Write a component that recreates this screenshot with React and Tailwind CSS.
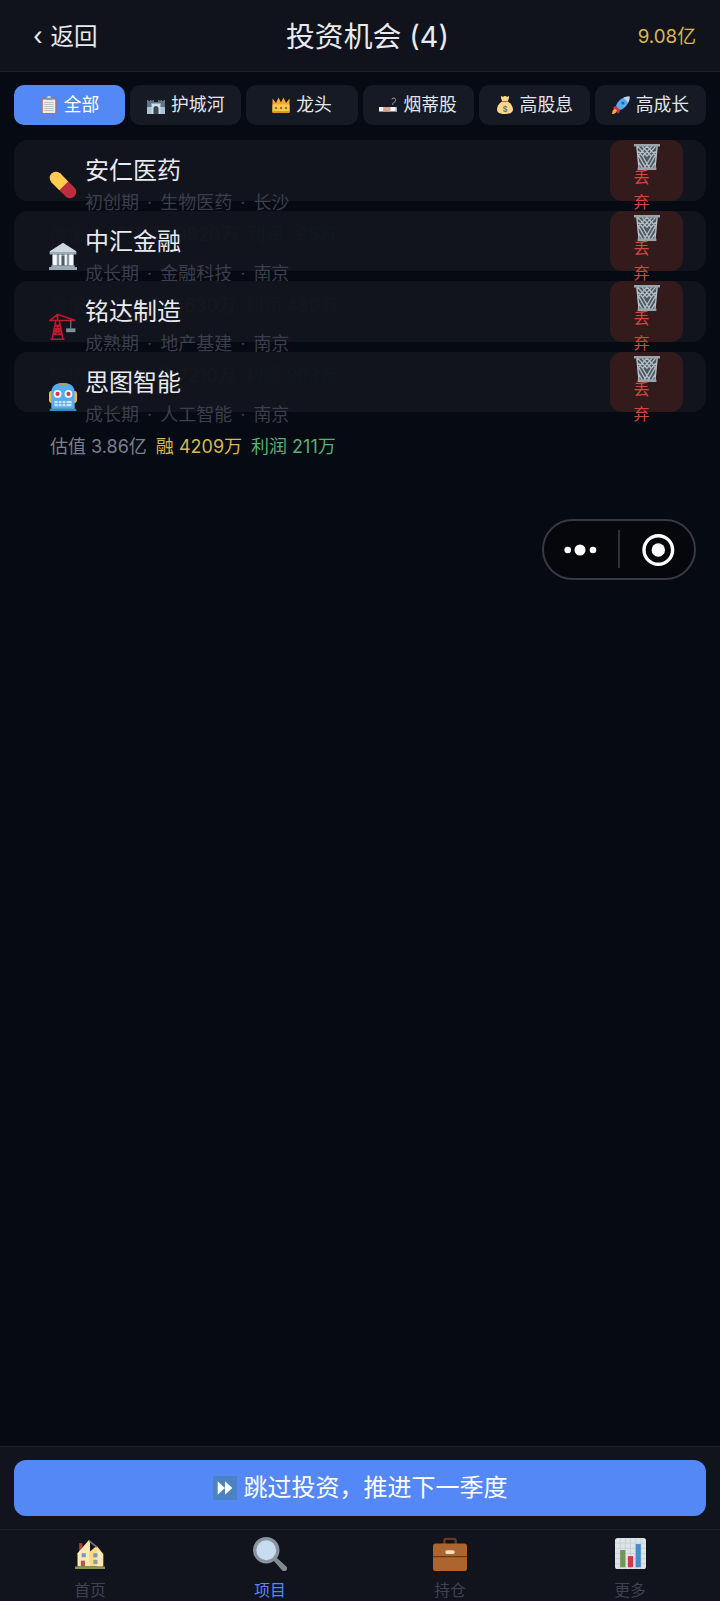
import React from "react";

const Pill = () => (
  <svg viewBox="0 0 36 36" className="w-full h-full">
    <path d="M9 9 27 27" stroke="#BE2D3D" strokeWidth="16" strokeLinecap="round" fill="none" />
    <circle cx="9" cy="9" r="8" fill="#FFCC4D" />
    <path d="M9 9 19 19" stroke="#FFCC4D" strokeWidth="16" fill="none" />
  </svg>
);
const Bank = () => (
  <svg viewBox="0 0 36 36" className="w-full h-full">
    <path fill="#CCD6DD" d="M18 1 35 12v3H1v-3z" />
    <path fill="#99AAB5" d="M1 13h34v3H1zM3 30h30v2H3zM0 32h36v4H0z" />
    <path fill="#8899A6" d="M4 16h28v14H4z" />
    <path fill="#4E5B66" d="M13 18h10v12H13z" />
    <path fill="#F5F8FA" d="M5 16h5v14H5zM13 16h3v14h-3zM20 16h3v14h-3zM26 16h5v14h-5z" />
  </svg>
);
const Crane = () => (
  <svg viewBox="0 0 36 36" className="w-full h-full">
    <path fill="none" stroke="#BE1931" strokeWidth="2" d="M9 10 4 35M13 10l5 25M2 35h18M7 17h8M6 23h10M5 29h12M7 17l9 6M15 17l-9 6M6 23l11 6M16 23 5 29M1 11 11 3l23 8zM11 3v7" />
    <path fill="none" stroke="#99AAB5" strokeWidth="1" d="M28 11v10" />
    <path fill="#808F99" d="M22 21h12v5H22z" />
  </svg>
);
const Robot = () => (
  <svg viewBox="0 0 36 36" className="w-full h-full">
    <path fill="#F4B740" d="M0 14a4 4 0 0 1 4-4h28a4 4 0 0 1 4 4v8a4 4 0 0 1-4 4H4a4 4 0 0 1-4-4z" />
    <path fill="#55ACEE" d="M3 12C3 3 10 0 18 0s15 3 15 12v20a2 2 0 0 1-2 2H5a2 2 0 0 1-2-2z" />
    <path fill="#F4900C" d="M12 .5h12v2H12z" opacity=".7" />
    <circle cx="11" cy="14" r="5" fill="#F5F8FA" />
    <circle cx="25" cy="14" r="5" fill="#F5F8FA" />
    <circle cx="11" cy="14" r="2.6" fill="#DD2E44" />
    <circle cx="25" cy="14" r="2.6" fill="#DD2E44" />
    <path fill="#CFE6F7" d="M7 23h22v5a2 2 0 0 1-2 2H9a2 2 0 0 1-2-2z" />
    <path fill="#55ACEE" d="M11 23h1.5v7H11zM16 23h1.5v7H16zM21 23h1.5v7H21zM7 26h22v1H7z" />
    <path fill="#3B88C3" d="M1 33h34v3H1z" />
  </svg>
);
const Clipboard = () => (
  <svg viewBox="0 0 36 36" className="w-full h-full">
    <rect x="3" y="4" width="30" height="32" rx="3" fill="#C1694F" />
    <rect x="5.5" y="7" width="25" height="27" rx="1" fill="#E8EDF0" />
    <path fill="#B9C4CC" d="M9 12h18v2H9zM9 16h18v2H9zM9 20h18v2H9zM9 24h18v2H9zM9 28h18v2H9z" />
    <path fill="#8899A6" d="M12 3h12v5H12z" />
    <path fill="#CCD6DD" d="M15 0h6v4h-6z" />
  </svg>
);
const Castle = () => (
  <svg viewBox="0 0 36 36" className="w-full h-full">
    <path fill="#5F7488" d="M0 8h3v2h3V8h3v2h2V8h3v4h8V8h3v2h2V8h3v2h3V8h3v26H0z" />
    <path fill="#A9C3D6" d="M0 22h36v14H0z" />
    <path fill="#CFDDE6" d="M9 14h18v22H9z" />
    <path fill="#3A4750" d="M13 36V25a5 5 0 0 1 10 0v11z" />
    <path fill="#5F7488" d="M9 12h18v3H9z" />
  </svg>
);
const Crown = () => (
  <svg viewBox="0 0 36 36" className="w-full h-full">
    <path fill="#F9A930" d="M1 33h34V5l-7 9-5-11-5 10-5-10-5 11-7-9z" />
    <path fill="#FFCC4D" d="M1 17h34v16H1z" />
    <circle cx="8" cy="24" r="2.5" fill="#7E7A3A" />
    <circle cx="18" cy="24" r="2.5" fill="#BE5B3C" />
    <circle cx="28" cy="24" r="2.5" fill="#7E7A3A" />
    <path fill="#F4900C" d="M1 30h34v3H1z" />
  </svg>
);
const Cigarette = () => (
  <svg viewBox="0 0 36 36" className="w-full h-full">
    <path fill="#F5F8FA" d="M0 22h36v9H0z" />
    <path fill="#D9A58F" d="M8 22h15v9H8z" />
    <path fill="#99AAB5" d="M33 22h3v9h-3z" />
    <path fill="none" stroke="#99AAB5" strokeWidth="2" d="M28 18c-2-2 0-4 2-5 4-2 4-6 2-8-2-2-6-1-6 2" />
  </svg>
);
const Bag = () => (
  <svg viewBox="0 0 36 36" className="w-full h-full">
    <path fill="#FDD888" d="M18 10C8 10 2 20 2 27c0 6 5 9 16 9s16-3 16-9c0-7-6-17-16-17z" />
    <path fill="#FDD888" d="M10 0c2 1 3 2 5 1s2-1 3-1 1 0 3 1 3 0 5-1c1 1-1 9-3 11H13C11 9 9 1 10 0z" />
    <path fill="#BF6952" d="M12 10h12v2.2H12z" />
    <text x="18" y="31" textAnchor="middle" fontSize="17" fontWeight="700" fill="#67757F" fontFamily="Liberation Sans, sans-serif">$</text>
  </svg>
);
const Rocket = () => (
  <svg viewBox="0 0 36 36" className="w-full h-full">
    <path fill="#DD2E44" d="M2 23c3-3 7-3 9-2l4 6c1 2 1 5-3 9-1-3-2-6-4-7-2-1-4-2-6-6z" />
    <path fill="#FFAC33" d="M3 27c-2 2-3 8-3 9s6-1 8-3c2-1 2-4 1-5-2-2-4-3-6-1z" />
    <path fill="#55ACEE" d="M35 1s-9-1-18 6c-5 4-8 9-9 13l8 8c4-1 9-4 13-9 7-9 6-18 6-18z" />
    <path fill="#CCD6DD" d="M35 1s-6-.5-12 2.5l9.5 9.5C36 7 35 1 35 1z" />
    <circle cx="22" cy="14" r="3.2" fill="#269" />
  </svg>
);
const Basket = () => (
  <svg viewBox="0 0 36 36" className="w-full h-full">
    <path fill="#4F5963" d="M3 2h30l-3 32H6z" />
    <path fill="none" stroke="#B4BEC6" strokeWidth="1.8" d="M5 3l13 14L30 3M11 3l13 14L30 10M18 3l12 13M25 3 12 17 6 10M18 3 6 16M6 15l11 19M30 15 19 34M12 17l10 17M24 17 14 34M6 24l6 10M30 24l-6 10M4 3l3 31M32 3l-3 31" />
    <path fill="#99A4AC" d="M0 0h36v3.5H0zM5 32.5h26V36H5z" />
  </svg>
);
const FastForward = () => (
  <svg viewBox="0 0 36 36" className="w-full h-full">
    <path fill="#4A83BF" d="M0 0h36v36H0z" />
    <path fill="#FFF" d="M7 8l11 10-11 10zM18 8l11 10-11 10z" />
  </svg>
);
const House = () => (
  <svg viewBox="0 0 36 36" className="w-full h-full">
    <path fill="#A8443C" d="M5 5h4v12H5z" />
    <path fill="#FFE8B6" d="M17 1 3 17v16h15V3z" />
    <path fill="#FFD983" d="M17 33V16l9-8 8 10v15z" />
    <path fill="#6B7680" d="M17 1l10 8-1.5 1.5-8.5-7z" />
    <path fill="#FFE8B6" d="M26 11l7 7v15h-7z" />
    <path fill="#6F9CC3" d="M8 17h5v5H8zM22 17h5v5h-5z" />
    <path fill="#8A9AA8" d="M22 25h5v5h-5z" />
    <path fill="#B5584A" d="M7 26h5v7H7z" />
    <path fill="#7C9A4E" d="M0 33h36v3H0z" />
  </svg>
);
const Search = () => (
  <svg viewBox="0 0 36 36" className="w-full h-full">
    <path fill="#7F8A93" d="M21 24l3-3 11 10a3 3 0 0 1-4 4.5z" />
    <circle cx="14" cy="14" r="14" fill="#8A949C" />
    <circle cx="14" cy="14" r="10.5" fill="#C7DCF0" />
  </svg>
);
const Brief = () => (
  <svg viewBox="0 0 36 36" className="w-full h-full">
    <path fill="none" stroke="#6A3A1E" strokeWidth="2.5" d="M12 8V4a2 2 0 0 1 2-2h8a2 2 0 0 1 2 2v4" />
    <path fill="#AC652F" d="M3 7h30a3 3 0 0 1 3 3v23a3 3 0 0 1-3 3H3a3 3 0 0 1-3-3V10a3 3 0 0 1 3-3z" />
    <path fill="#6A3A1E" d="M0 20h36v1.5H0z" />
    <path fill="#F0DFC0" d="M15 14h6a1.5 1.5 0 0 1 0 4h-6a1.5 1.5 0 0 1 0-4z" />
  </svg>
);
const Chart = () => (
  <svg viewBox="0 0 36 36" className="w-full h-full">
    <rect width="36" height="36" rx="3" fill="#DDE3E8" />
    <path fill="none" stroke="#C7D0D7" strokeWidth="1" d="M0 6h36M0 12h36M0 18h36M0 24h36M0 30h36M6 0v36M12 0v36M18 0v36M24 0v36M30 0v36" />
    <path fill="#6D9A4E" d="M6 14h6v20H6z" />
    <path fill="#CF3A4A" d="M15 21h6v13h-6z" />
    <path fill="#4A8CC9" d="M24 7h6v27h-6z" />
  </svg>
);

const tabs = [
  [Clipboard, "全部", true],
  [Castle, "护城河"],
  [Crown, "龙头"],
  [Cigarette, "烟蒂股"],
  [Bag, "高股息"],
  [Rocket, "高成长"],
];

const items = [
  [Pill, "安仁医药", "初创期", "生物医药", "长沙", "3.41亿", "3820万", "-96万"],
  [Bank, "中汇金融", "成长期", "金融科技", "南京", "5.12亿", "5630万", "480万"],
  [Crane, "铭达制造", "成熟期", "地产基建", "南京", "6.27亿", "7210万", "903万"],
  [Robot, "思图智能", "成长期", "人工智能", "南京", "3.86亿", "4209万", "211万"],
];

const nav = [
  [House, "首页", false, "w-[30px] h-[30px] mt-[2px] mb-[2px]"],
  [Search, "项目", true, "w-[34px] h-[34px]"],
  [Brief, "持仓", false, "w-[34px] h-[34px]"],
  [Chart, "更多", false, "w-[31px] h-[31px] mt-[1px] mb-[2px]"],
];

export default function App() {
  return (
    <div
      className="relative flex h-[1601px] w-[720px] flex-col overflow-hidden bg-[#060a12] text-[#e8eaf0]"
      style={{ fontFamily: 'Inter, "Noto Sans CJK SC", sans-serif' }}
    >
      <header className="flex h-[72px] shrink-0 items-center justify-between border-b border-[#1c1f29] bg-[#10131c] pl-[33px] pr-[24px] pt-[2px]">
        <div className="flex w-[126px] items-center text-[23.5px]">
          <span className="mr-[8px] text-[25px] leading-none">‹</span>
          <span>返回</span>
        </div>
        <h1 className="text-[28.8px] font-normal">投资机会 (4)</h1>
        <div className="mt-[2px] w-[120px] text-right text-[18.8px] text-[#d8b94f]">9.08亿</div>
      </header>

      <div className="flex shrink-0 gap-[5px] px-[14px] pt-[13px]">
        {tabs.map(([Icon, label, active]) => (
          <div
            key={label}
            className={`flex h-[40px] flex-1 items-center justify-center gap-[6px] rounded-[10px] text-[17.8px] ${
              active ? "bg-[#5488f7] text-white" : "bg-[#161a24] text-[#e3e6ec]"
            }`}
          >
            <span className="h-[18px] w-[18px] shrink-0">
              <Icon />
            </span>
            <span>{label}</span>
          </div>
        ))}
      </div>

      <main className="flex flex-1 flex-col gap-[10px] px-[14px] pt-[15px]">
        {items.map(([Icon, name, stage, sector, city, value, fund, profit]) => (
          <div key={name} className="flex h-[60.5px] shrink-0 justify-between rounded-[14px] bg-[#11141d]/[0.985] pl-[35px] pr-[23px]">
            <div className="w-[400px] pt-[15px]">
              <div className="flex items-center gap-[8px]">
                <span className="h-[28px] w-[28px] shrink-0 -translate-y-[2px]">
                  <Icon />
                </span>
                <div>
                  <div className="text-[24px] leading-[32px] text-[#e8eaf0]">{name}</div>
                  <div className="flex text-[18px] leading-[32px] whitespace-nowrap text-[#3b3f4d]">
                    <span>{stage}</span>
                    <span className="mx-[8px]">·</span>
                    <span>{sector}</span>
                    <span className="mx-[8px]">·</span>
                    <span>{city}</span>
                  </div>
                </div>
              </div>
              <div className="flex gap-[9px] pl-[1px] text-[18px] leading-[32px] whitespace-nowrap">
                <span className="text-[#7b8090]">估值 {value}</span>
                <span className="text-[#d8b94f]">融 {fund}</span>
                <span className="text-[#58b070]">利润 {profit}</span>
              </div>
            </div>
            <div className="flex h-[60.5px] w-[73px] flex-col items-center rounded-[12px] bg-[#331a1b] pt-[4px]">
              <span className="h-[26px] w-[26px] shrink-0">
                <Basket />
              </span>
              <span className="-mt-[5px] mr-[10px] w-[18px] text-center text-[16px] leading-[25px] text-[#d5483f]">丢弃</span>
            </div>
          </div>
        ))}
      </main>

      <div className="shrink-0 border-t border-[#1c1f29] bg-[#11141d] px-[14px] pb-[13px] pt-[13px]">
        <button className="flex h-[56px] w-full items-center justify-center gap-[7px] rounded-[12px] bg-[#5488f7] text-[24px] text-white">
          <span className="h-[24px] w-[24px]">
            <FastForward />
          </span>
          跳过投资，推进下一季度
        </button>
      </div>

      <nav className="flex h-[72px] shrink-0 border-t border-[#1c1f29] bg-[#11141d]">
        {nav.map(([Icon, label, active, size]) => (
          <div key={label} className="flex flex-1 flex-col items-center pt-[7px]">
            <span className={size}>
              <Icon />
            </span>
            <span className={`mt-[10px] text-[15.8px] leading-[20px] ${active ? "text-[#5488f7]" : "text-[#3f4350]"}`}>{label}</span>
          </div>
        ))}
      </nav>

      <div className="absolute left-[542px] top-[519px] h-[61px] w-[154px] rounded-full border-2 border-[#373a3f] bg-[#05070c]">
        <svg viewBox="0 0 150 57" className="h-full w-full">
          <circle cx="23.7" cy="29" r="3.3" fill="#fff" />
          <circle cx="36" cy="29" r="5.5" fill="#fff" />
          <circle cx="49" cy="29" r="3.3" fill="#fff" />
          <path d="M75 9v38" stroke="#3d4045" strokeWidth="1.5" />
          <circle cx="114.3" cy="29" r="14.3" fill="none" stroke="#fff" strokeWidth="3.4" />
          <circle cx="114.3" cy="29" r="6.7" fill="#fff" />
        </svg>
      </div>
    </div>
  );
}
